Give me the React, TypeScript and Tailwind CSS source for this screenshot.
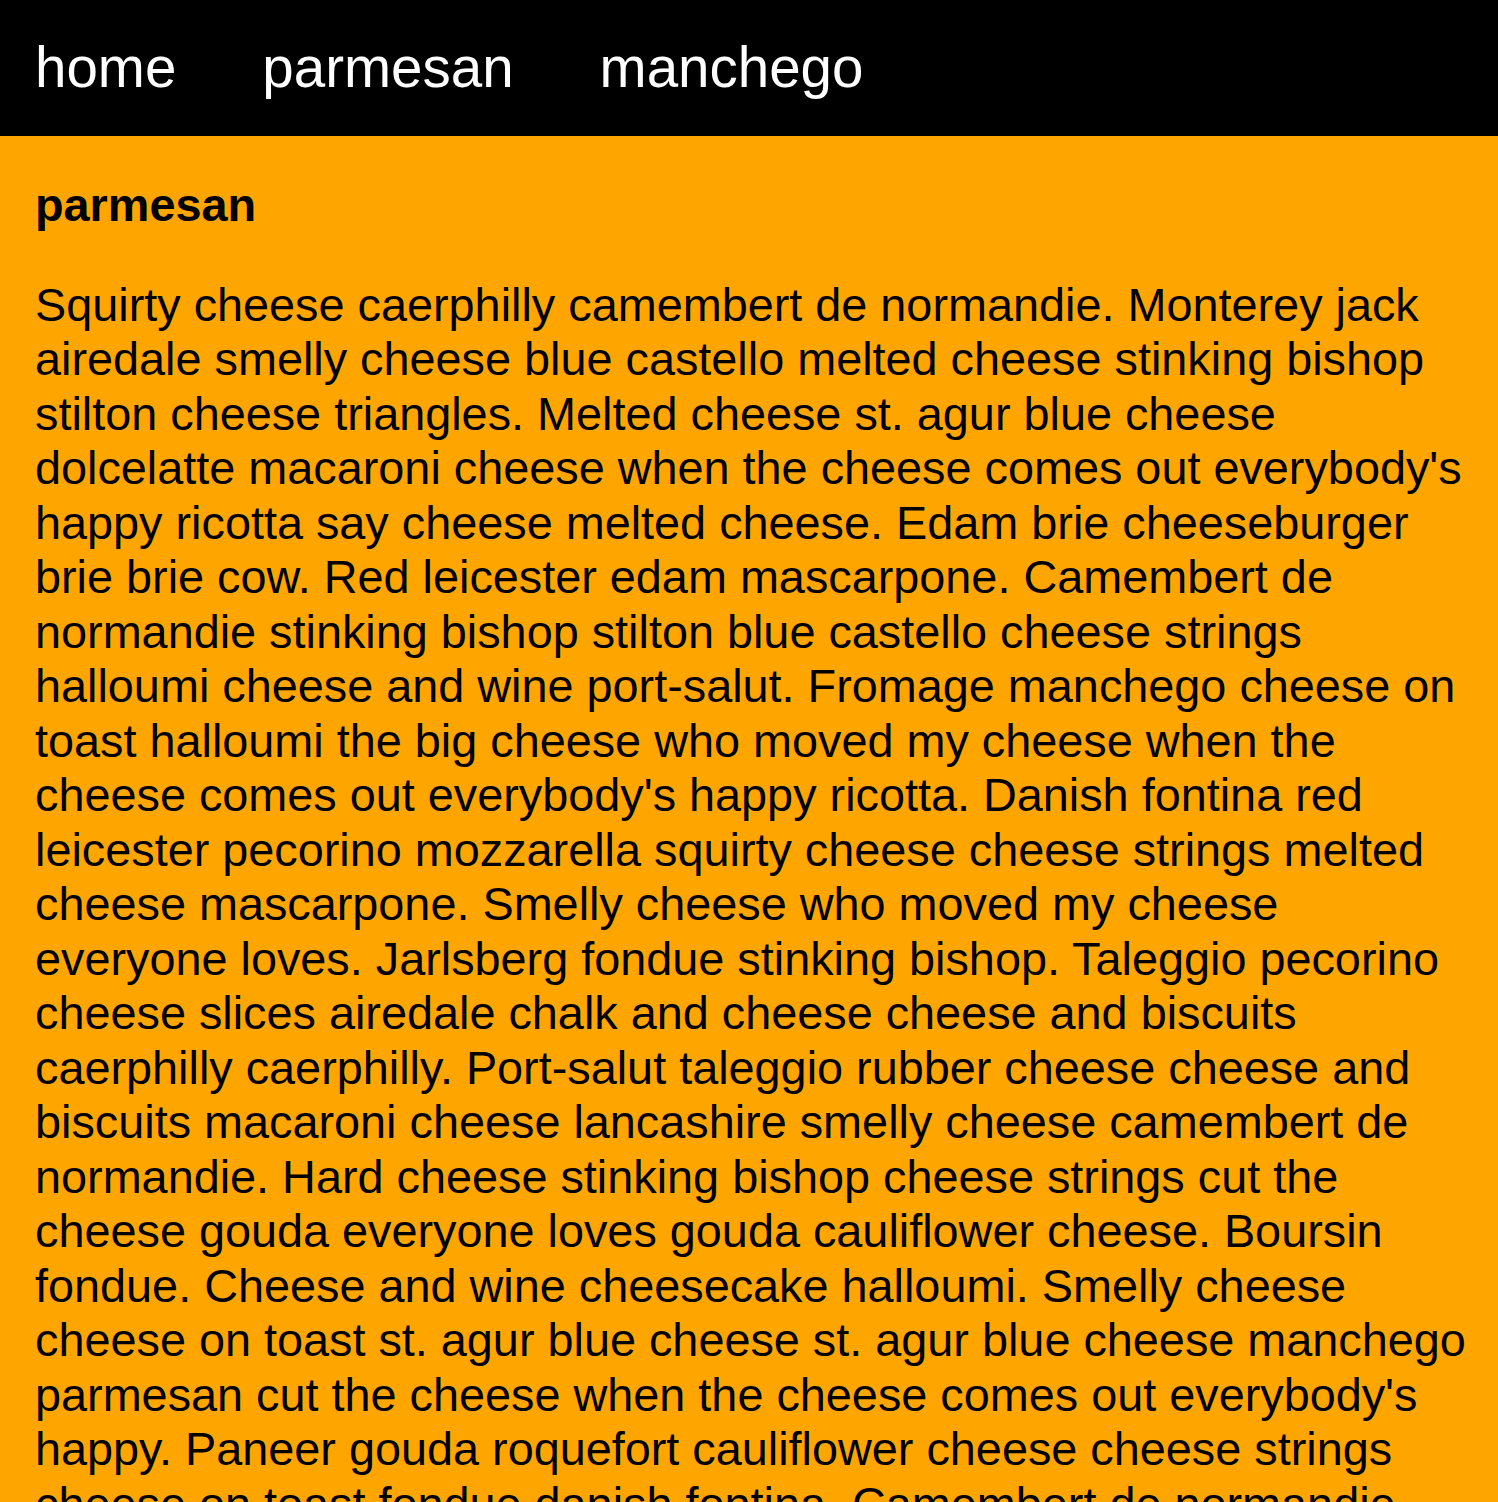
export default function App() {
  const text =
    "Squirty cheese caerphilly camembert de normandie. Monterey jack airedale smelly cheese blue castello melted cheese stinking bishop stilton cheese triangles. Melted cheese st. agur blue cheese dolcelatte macaroni cheese when the cheese comes out everybody's happy ricotta say cheese melted cheese. Edam brie cheeseburger brie brie cow. Red leicester edam mascarpone. Camembert de normandie stinking bishop stilton blue castello cheese strings halloumi cheese and wine port-salut. Fromage manchego cheese on toast halloumi the big cheese who moved my cheese when the cheese comes out everybody's happy ricotta. Danish fontina red leicester pecorino mozzarella squirty cheese cheese strings melted cheese mascarpone. Smelly cheese who moved my cheese everyone loves. Jarlsberg fondue stinking bishop. Taleggio pecorino cheese slices airedale chalk and cheese cheese and biscuits caerphilly caerphilly. Port-salut taleggio rubber cheese cheese and biscuits macaroni cheese lancashire smelly cheese camembert de normandie. Hard cheese stinking bishop cheese strings cut the cheese gouda everyone loves gouda cauliflower cheese. Boursin fondue. Cheese and wine cheesecake halloumi. Smelly cheese cheese on toast st. agur blue cheese st. agur blue cheese manchego parmesan cut the cheese when the cheese comes out everybody's happy. Paneer gouda roquefort cauliflower cheese cheese strings cheese on toast fondue danish fontina. Camembert de normandie cheesy grin cheese slices.";
  return (
    <div className="min-h-screen bg-[#ffa500] font-['Liberation_Sans',Arial,sans-serif] text-black">
      <nav className="flex h-[136px] items-center gap-[86px] bg-black px-[35px] text-[56.5px] text-white">
        <a>home</a>
        <a>parmesan</a>
        <a>manchego</a>
      </nav>
      <main className="pl-[35px] pr-[24px] pt-[42px] text-[46.8px] leading-[54.5px]">
        <h4 className="mb-[45px] font-bold">parmesan</h4>
        <p>{text}</p>
      </main>
    </div>
  );
}
